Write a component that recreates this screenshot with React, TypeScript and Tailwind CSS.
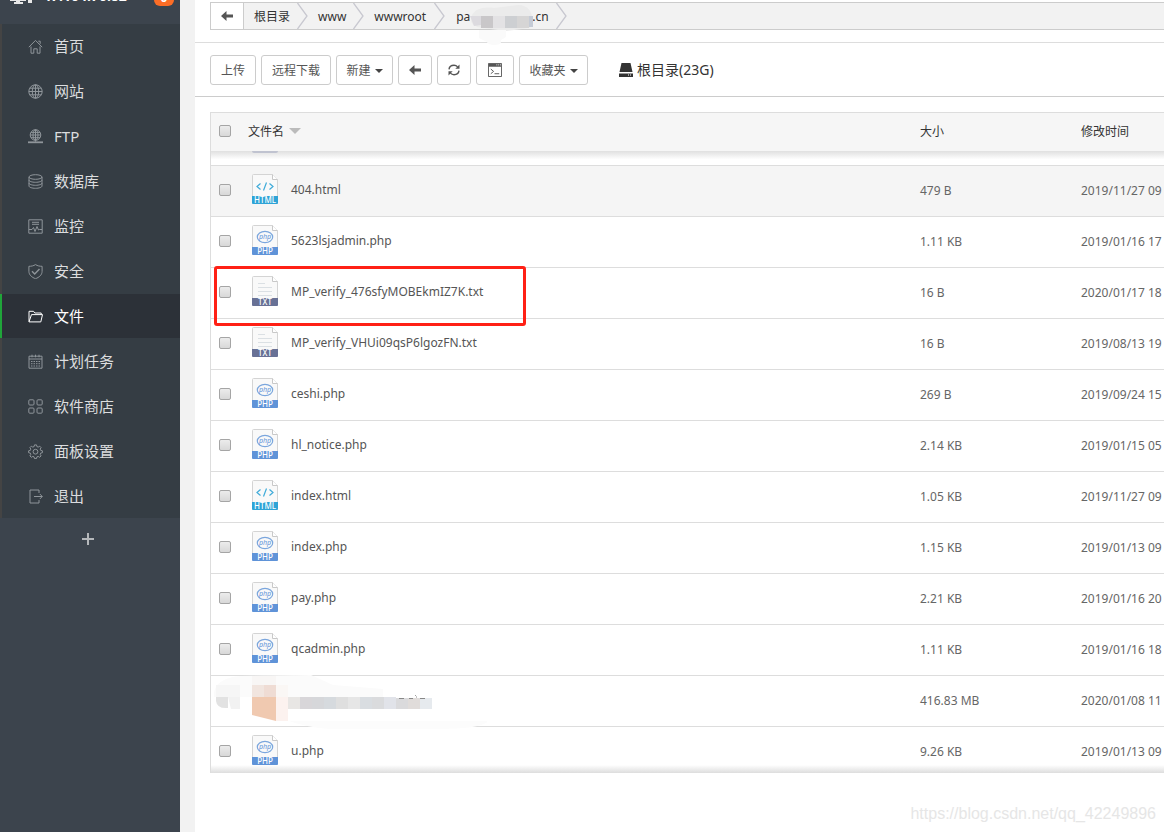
import type { ReactNode } from 'react';
import clsx from 'clsx';

type FileKind = 'html' | 'php' | 'txt';

const menuItems = [
  { name: '首页', icon: 'home' },
  { name: '网站', icon: 'site' },
  { name: 'FTP', icon: 'ftp' },
  { name: '数据库', icon: 'database' },
  { name: '监控', icon: 'monitor' },
  { name: '安全', icon: 'safe' },
  { name: '文件', icon: 'folder' },
  { name: '计划任务', icon: 'calendar' },
  { name: '软件商店', icon: 'store' },
  { name: '面板设置', icon: 'config' },
  { name: '退出', icon: 'exit' },
];

const files: { name: string; kind: FileKind | 'masked'; size: string; time: string }[] = [
  { name: '404.html', kind: 'html', size: '479 B', time: '2019/11/27 09' },
  { name: '5623lsjadmin.php', kind: 'php', size: '1.11 KB', time: '2019/01/16 17' },
  { name: 'MP_verify_476sfyMOBEkmIZ7K.txt', kind: 'txt', size: '16 B', time: '2020/01/17 18' },
  { name: 'MP_verify_VHUi09qsP6lgozFN.txt', kind: 'txt', size: '16 B', time: '2019/08/13 19' },
  { name: 'ceshi.php', kind: 'php', size: '269 B', time: '2019/09/24 15' },
  { name: 'hl_notice.php', kind: 'php', size: '2.14 KB', time: '2019/01/15 05' },
  { name: 'index.html', kind: 'html', size: '1.05 KB', time: '2019/11/27 09' },
  { name: 'index.php', kind: 'php', size: '1.15 KB', time: '2019/01/13 09' },
  { name: 'pay.php', kind: 'php', size: '2.21 KB', time: '2019/01/16 20' },
  { name: 'qcadmin.php', kind: 'php', size: '1.11 KB', time: '2019/01/16 18' },
  { name: '', kind: 'masked', size: '416.83 MB', time: '2020/01/08 11' },
  { name: 'u.php', kind: 'php', size: '9.26 KB', time: '2019/01/13 09' },
];

const menuIcons: Record<string, ReactNode> = {
  home: (
    <>
      <path d="M.8 8.2 7.5 1.4l6.7 6.8" />
      <path d="M3 7.5v6.7h2.8V9.8h3.4v4.4H12V7.5M10.3 2.2h1.9v2.6" />
    </>
  ),
  site: (
    <>
      <circle cx="7.5" cy="7.5" r="6.7" />
      <ellipse cx="7.5" cy="7.5" rx="3.2" ry="6.7" />
      <path d="M7.5.8v13.4M.8 7.5h13.4M1.8 4.2h11.4M1.8 10.8h11.4" />
    </>
  ),
  ftp: (
    <>
      <circle cx="7.5" cy="6" r="5.3" />
      <ellipse cx="7.5" cy="6" rx="2.5" ry="5.3" />
      <path d="M7.5.7v12M2.2 6h10.6M3 3.4h9M3 8.7h9" />
      <path d="M0 13.3h15" strokeWidth="1.8" />
    </>
  ),
  database: (
    <>
      <ellipse cx="7.5" cy="3" rx="6.5" ry="2.3" />
      <path d="M1 3v9c0 1.3 2.9 2.3 6.5 2.3S14 13.3 14 12V3" />
      <path d="M1 6c0 1.3 2.9 2.3 6.5 2.3S14 7.3 14 6M1 9c0 1.3 2.9 2.3 6.5 2.3S14 10.3 14 9" />
    </>
  ),
  monitor: (
    <>
      <path d="M.8.8h13.4v13.4H.8z" />
      <path d="M4 3.3h7M4 5.3h7" />
      <path d="M1 10.5h3l1.5-2 1.5 4 2-5 1.5 3.5 1-.5H14" />
    </>
  ),
  safe: (
    <>
      <path d="M7.5.6c2 1.3 4.2 1.7 6.6 1.7v5c0 3.600-2.900 6-6.600 7.400C3.800 13.300.9 10.900.9 7.300v-5C3.300 2.300 5.500 1.900 7.500.6z" />
      <path d="m4 7.2 2.700 2.700L11.500 5" strokeWidth="1.4" />
    </>
  ),
  folder: (
    <>
      <path d="M1 12.7V2.3h4.5l1.3 1.7h6.4v1.700" />
      <path d="M1 12.9 3.5 5.6h11L12.8 12.9z" />
    </>
  ),
  calendar: (
    <>
      <path d="M1 2.2h13v12H1zM1 5h13M4 .7v2.600M7.5.7v2.600M11 .7v2.600" />
      <path d="M3 7.5h9.500M3 9.7h9.500M3 12h9.500" strokeDasharray="1.5 1" />
    </>
  ),
  store: (
    <>
      <rect x=".8" y=".8" width="5.2" height="5.2" rx="1" />
      <rect x="9" y=".8" width="5.2" height="5.2" rx="1" />
      <rect x=".8" y="9" width="5.2" height="5.2" rx="1" />
      <rect x="9" y="9" width="5.2" height="5.2" rx="1" />
    </>
  ),
  config: (
    <>
      <path d="m6.5.9h2l.4 1.700 1.300.5 1.500-.9 1.400 1.400-.9 1.500.5 1.300 1.700.4v1.900l-1.700.4-.5 1.300.9 1.500-1.400 1.400-1.500-.9-1.300.5-.4 1.700h-2l-.4-1.700-1.300-.5-1.500.9-1.400-1.400.9-1.500-.5-1.300L.6 8.700V6.800l1.700-.4.5-1.300-.9-1.500 1.400-1.400 1.500.9 1.300-.5z" />
      <circle cx="7.5" cy="7.7" r="2.4" />
    </>
  ),
  exit: (
    <>
      <path d="M11 4V1H2v13h9v-3" />
      <path d="M6 7.5h8.200M11.800 5l2.500 2.500L11.800 10" />
    </>
  ),
};

function MenuIcon({ name }: { name: string }) {
  return (
    <svg className="size-[15px] shrink-0" viewBox="0 0 15 15" fill="none" stroke="currentColor" strokeWidth="1">
      {menuIcons[name]}
    </svg>
  );
}

function ArrowLeft() {
  return (
    <svg className="h-3 w-3" viewBox="0 0 12 12" fill="currentColor">
      <path d="M0 6 5.500 1v3.400H12v3.200H5.500V11z" />
    </svg>
  );
}

function Chevron() {
  return (
    <svg className="h-[26px] w-[11px] shrink-0" viewBox="0 0 11 26" fill="none" stroke="#c8c8d0" strokeWidth="1.3">
      <path d="M.5 0 10 13 .5 26" />
    </svg>
  );
}

function Caret() {
  return <span className="ml-1 border-x-4 border-t-4 border-x-transparent border-t-[#444]" />;
}

const kindColors: Record<FileKind, string> = { html: '#2ea3d6', php: '#5f93d8', txt: '#687196' };

function FileIcon({ kind }: { kind: FileKind }) {
  return (
    <svg className="mb-[2px] h-[30px] w-[26px] shrink-0" viewBox="0 0 26 30">
      <path d="M.5 29V1.500a1 1 0 0 1 1-1H20.500l5 5V29z" fill="#f9f9f9" stroke="#d4d4d4" />
      <path d="M20.500.5v5h5" fill="#fff" stroke="#c8c8c8" />
      <path d="M0 22h26v7a1 1 0 0 1-1 1H1a1 1 0 0 1-1-1z" fill={kindColors[kind]} />
      {kind === 'html' && (
        <path d="m8.500 9.500-3.500 3 3.500 3M17.500 9.500l3.500 3-3.500 3M14.500 8.500l-3 8" fill="none" stroke="#3fabd9" strokeWidth="1.2" />
      )}
      {kind === 'txt' && <path d="M6 7.500h7M6 11.500h14M6 15.500h14M6 19.500h14" stroke="#dbe0e4" />}
      {kind === 'php' && (
        <>
          <ellipse cx="13" cy="12" rx="7.7" ry="5.7" fill="none" stroke="#7ba6dd" strokeWidth="1.2" />
          <text x="13" y="14" textAnchor="middle" fontSize="7" fontStyle="italic" fill="#5f93d8" fontFamily="Noto Sans">
            php
          </text>
        </>
      )}
      <text x="13" y="29" textAnchor="middle" fontSize="8" fill="#fff" fontFamily="Noto Sans" fontWeight="500">
        {kind.toUpperCase()}
      </text>
    </svg>
  );
}

function Checkbox({ label }: { label: string }) {
  return (
    <input
      type="checkbox"
      aria-label={label}
      className="block size-3 appearance-none rounded-[2px] border border-[#a5a5a5] bg-linear-to-b from-[#ececec] to-[#d8d8d8]"
    />
  );
}

function ToolButton({ children, label, className }: { children: ReactNode; label?: string; className: string }) {
  return (
    <button
      aria-label={label}
      className={clsx(
        'flex h-[30px] shrink-0 items-center justify-center rounded-[3px] border border-[#ccc] bg-white text-xs whitespace-nowrap text-[#555]',
        !label && 'pt-[2px]',
        className
      )}
    >
      {children}
    </button>
  );
}

// Blurred out file name
function MaskedName() {
  return (
    <svg className="absolute -top-px left-0 h-[54px] w-[276px]" viewBox="0 0 276 54">
      <path d="M3 20C3 7 16 2 30 1L100 0 122 10 172 14V22H3z" fill="#fbfbfb" />
      <path d="M78 46H278C270 52 255 54 230 54H120C100 53 88 49 78 46z" fill="#fcfcfc" />
      <path d="M5 10h24v12H5z" fill="#f6f6f6" />
      <path d="M5 22h12v11Q6 34 5 26z" fill="#e2e2e2" />
      <path d="M17 22h12v12H20z" fill="#f2f2f2" />
      <path d="M41 1h24v9H41z" fill="#f8f6f5" />
      <path d="M41 10h12v12H41z" fill="#f1e5df" />
      <path d="M53 10h12v12H53z" fill="#efdcd4" />
      <path d="M41 22h24v24L41 40z" fill="#f0c9b0" />
      <path d="M65 10h12v12H65z" fill="#faf7f5" />
      <path d="M65 22h12v24H65z" fill="#fcf2ef" />
      <path d="M77 22h12v12H77z" fill="#e8e6e4" />
      <path d="M89 22h12v12H89z" fill="#d8d6d9" />
      <path d="M101 22h12v12h-12z" fill="#d6d7da" />
      <path d="M113 22h12v12h-12z" fill="#d6dade" />
      <path d="M125 22h12v12h-12z" fill="#dfdfdf" />
      <path d="M137 22h12v12h-12z" fill="#e6e6e6" />
      <path d="M149 22h12v12h-12z" fill="#d9dde1" />
      <path d="M161 22h12v12h-12z" fill="#dadbdd" />
      <path d="M173 22h12v12h-12z" fill="#e1e3e9" />
      <path d="M185 23h12v11h-12z" fill="#dadadc" />
      <path d="M197 23h12v11h-12z" fill="#e0dcda" />
      <path d="M209 23h12v11h-12z" fill="#e6eaee" />
      <path d="M188 23.500h5M198 23.500h4M205 22h1M209 23.500h5M204.500 20v.8" stroke="#888" />
    </svg>
  );
}

function Sidebar() {
  return (
    <aside className="w-[180px] shrink-0 bg-[#3c444d]">
      <div className="flex h-6 items-start overflow-hidden">
        <div className="-mt-5 flex h-[26px] w-full items-end gap-[11px] pl-2">
          <svg className="h-[23px] w-6 shrink-0" viewBox="0 0 24 23" fill="#e8e8e8">
            <path d="M2 0h16v18H2zM8 18h4v2H8zM6 19h9v2H6zM20 2h4v18h-4z" />
          </svg>
          <span className="flex-1 text-sm leading-5 font-bold text-white">47.104.70.82</span>
          <span className="mr-[6px] h-5 w-5 rounded-md bg-[#fc6d26] text-center text-xs leading-6 font-bold text-white">0</span>
        </div>
      </div>
      <nav className="border-l-2 border-[#444] bg-[#353d44]">
        {menuItems.map((item) => (
          <a
            key={item.name}
            href="#"
            className={clsx(
              'mb-px -ml-[2px] flex h-11 items-center gap-[11px] border-l-2 pl-[26px] text-[15px] last:mb-0',
              item.icon === 'folder' ? 'border-[#20a53a] bg-[#2c3138] text-white' : 'border-[#444] text-[#8f959a]'
            )}
          >
            <MenuIcon name={item.icon} />
            <span className={item.icon === 'folder' ? 'text-white' : 'text-[#dcdddf]'}>{item.name}</span>
          </a>
        ))}
      </nav>
      <button aria-label="添加" className="flex h-[42px] w-full items-center justify-center pr-1 text-[#b5b8bb]">
        <svg className="size-3" viewBox="0 0 12 12" stroke="currentColor" strokeWidth="2">
          <path d="M6 0v12M0 6h12" />
        </svg>
      </button>
    </aside>
  );
}

function PathBar() {
  return (
    <div className="border-b border-[#ddd] pt-[2px] pb-3 pl-[15px]">
      <div className="flex h-7 items-center border border-r-0 border-[#ccc] bg-[#f2f2f2] text-xs text-[#333]">
        <button aria-label="后退" className="flex h-full w-[33px] items-center justify-center border-r border-[#ccc] bg-white text-[#555]">
          <ArrowLeft />
        </button>
        <a href="#" className="pt-[2px] pr-[7px] pl-[10px]">根目录</a>
        <Chevron />
        <a href="#" className="pt-[2px] pr-[7px] pl-[10px]">www</a>
        <Chevron />
        <a href="#" className="pt-[2px] pr-[8px] pl-[10px]">wwwroot</a>
        <Chevron />
        <a href="#" className="flex items-center pt-[2px] pr-[7px] pl-[11px]">
          pa
          <span className="relative h-[26px] w-[62px]">
            <svg className="absolute top-0 left-0 h-[42px] w-[63px]" viewBox="0 0 63 42">
              <path d="M1 16C1 6 12 2 24 4L48 1C58 1 62 8 62 14L60 24 36 27 12 24C5 23 1 20 1 16z" fill="#ebebeb" />
              <path d="M9 26h27v7l-5 3v2c0 4-13 4-14 0l-8-4z" fill="#fafafa" />
              <path d="M0 12h11v9L4 22z" fill="#dcdadf" />
              <path d="M11 12h12v12H11z" fill="#c9c7c9" />
              <path d="M23 12h12v12H23z" fill="#e3e2e4" />
              <path d="M35 12h12v12H35z" fill="#cdcfd2" />
              <path d="M47 12h12v12H47z" fill="#d6d5d5" />
              <path d="M59 12h4v11h-4z" fill="#c5cbd6" />
            </svg>
          </span>
          .cn
        </a>
        <Chevron />
      </div>
    </div>
  );
}

function Toolbar() {
  return (
    <div className="flex items-center gap-[5px] border-b border-[#ccc] pt-3 pb-[11px] pl-[15px]">
      <ToolButton className="w-[46px]">上传</ToolButton>
      <ToolButton className="w-[70px]">远程下载</ToolButton>
      <ToolButton className="w-[57px]">
        新建
        <Caret />
      </ToolButton>
      <ToolButton label="后退" className="w-[34px]">
        <ArrowLeft />
      </ToolButton>
      <ToolButton label="刷新" className="w-[34px]">
        <svg className="size-3" viewBox="0 0 12 12" fill="none" stroke="currentColor" strokeWidth="1.4">
          <path d="M1 5.300C1.300 3 3.300 1.300 6 1.300c1.500 0 2.700.6 3.600 1.600M11 6.700c-.3 2.300-2.300 4-5 4-1.500 0-2.700-.6-3.600-1.600" />
          <path d="M11.500.5v4.200H7.300zM.5 11.500V7.300h4.200z" fill="currentColor" stroke="none" />
        </svg>
      </ToolButton>
      <ToolButton label="终端" className="w-[38px]">
        <svg className="h-[14px] w-[14px]" viewBox="0 0 15 15" fill="none" stroke="currentColor">
          <path d="M.5.500h14v14H.5z" />
          <path d="M1 2.500h13" strokeWidth="3" />
          <path d="M9 2h1M11 2h1M13 2h1" stroke="#fff" />
          <path d="m3 6.500 3 2.500-3 2.500M7 11.500h5" />
        </svg>
      </ToolButton>
      <ToolButton className="w-[69px]">
        收藏夹
        <Caret />
      </ToolButton>
      <a href="#" className="ml-[26px] flex items-center gap-1 text-sm text-[#333]">
        <svg className="h-[14px] w-[14px]" viewBox="0 0 14 14" fill="currentColor">
          <path d="M2.500 0h9L13.500 9h-13zM0 10.500h14V14H0z" />
          <path d="M9 12h1M11 12h1" stroke="#fff" />
        </svg>
        根目录(23G)
      </a>
    </div>
  );
}

function FileTable() {
  return (
    <div className="relative mt-[15px] ml-[15px] max-h-[661px] overflow-hidden border-t border-l border-[#ddd]">
      <table className="w-full table-fixed border-separate border-spacing-0 text-left text-xs whitespace-nowrap text-[#666]">
        <colgroup>
          <col className="w-[29px]" />
          <col />
          <col className="w-[161px]" />
          <col className="w-[91px]" />
        </colgroup>
        <thead className="text-[#333]">
          <tr className="h-[38px] bg-[#f6f6f6]">
            <th className="p-0 pb-[2px] pl-2 font-normal">
              <Checkbox label="全选" />
            </th>
            <th className="p-0 pl-2 font-normal">
              <span className="flex items-center gap-[5px]">
                文件名
                <span className="mb-[2px] border-x-6 border-t-6 border-x-transparent border-t-[#bbb]" />
              </span>
            </th>
            <th className="p-0 pl-2 font-normal">大小</th>
            <th className="p-0 pl-2 font-normal">修改时间</th>
          </tr>
        </thead>
        <tbody>
          {/* Row scrolled under the header */}
          <tr>
            <td colSpan={4} className="border-b border-[#ddd] p-0">
              <div className="h-[14px] overflow-hidden bg-linear-to-b from-[#e0e0e0] to-white to-60% pl-[41px]">
                <div className="h-[2px] w-[26px] rounded-b-xs bg-[#c0c3d0]" />
              </div>
            </td>
          </tr>
          {files.map((file, i) => (
            <tr key={i} className={clsx('h-[51px]', i === 0 && 'bg-[#f5f5f5]')}>
              <td className="relative border-b border-[#ddd] p-0 pb-[2px] pl-2">
                {file.kind === 'masked' ? <MaskedName /> : <Checkbox label={file.name} />}
                {i === 2 && (
                  <div className="pointer-events-none absolute -top-[2px] left-[3px] z-10 h-[60px] w-[312px] rounded-[3px] border-3 border-[#ff2015]" />
                )}
              </td>
              <td className="border-b border-[#ddd] p-0 pb-[3px] pl-3">
                {file.kind !== 'masked' && (
                  <a href="#" className="flex items-center gap-[13px] text-[#555]">
                    <FileIcon kind={file.kind} />
                    {file.name}
                  </a>
                )}
              </td>
              <td className="border-b border-[#ddd] p-0 pl-2">{file.size}</td>
              <td className="border-b border-[#ddd] p-0 pl-2">{file.time}</td>
            </tr>
          ))}
        </tbody>
      </table>
      <div className="absolute inset-x-0 bottom-0 h-2 bg-linear-to-b from-transparent to-[#ddd]" />
    </div>
  );
}

export default function App() {
  return (
    <div className="relative flex min-h-screen overflow-hidden bg-[#f2f2f2] font-['Noto_Sans','Noto_Sans_CJK_SC',sans-serif]">
      <Sidebar />
      <main className="ml-[15px] min-w-0 flex-1 bg-white">
        <PathBar />
        <Toolbar />
        <FileTable />
      </main>
      <div className="absolute right-2 bottom-2 font-['Liberation_Sans',sans-serif] text-base leading-5 text-[#e6e6e6]">
        https://blog.csdn.net/qq_42249896
      </div>
    </div>
  );
}
